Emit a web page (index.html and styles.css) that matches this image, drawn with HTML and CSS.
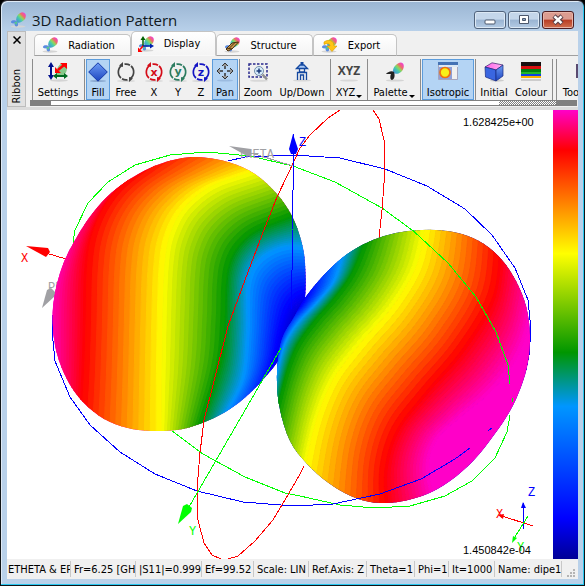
FILE: index.html
```html
<!DOCTYPE html>
<html lang="en">
<head>
  <meta charset="UTF-8" />
  <title>3D Radiation Pattern</title>
  <link rel="stylesheet" href="styles.css">
</head>
<body>
  <!-- Shared icon shapes -->
  <svg class="defs" width="0" height="0" aria-hidden="true">
    <defs>
      <linearGradient id="lobeGrad" x1="0" y1="1" x2="1" y2="0">
        <stop offset="0" stop-color="#4a7de0" />
        <stop offset="0.35" stop-color="#45c8b0" />
        <stop offset="0.52" stop-color="#8fd85a" />
        <stop offset="0.68" stop-color="#f06a6a" />
        <stop offset="0.9" stop-color="#f040d0" />
      </linearGradient>
      <linearGradient id="blueGrad" x1="0" y1="0" x2="0" y2="1">
        <stop offset="0" stop-color="#6e9cf4" />
        <stop offset="1" stop-color="#1c45c0" />
      </linearGradient>
      <linearGradient id="pinkGrad">
        <stop offset="0" stop-color="#ff60e8" />
        <stop offset="1" stop-color="#ffb0f0" />
      </linearGradient>
      <symbol id="lobe" viewBox="0 0 16 16">
        <ellipse cx="8" cy="14.5" rx="7.5" ry="1.2" fill="#d4d4d4" />
        <path d="M7 10.500C4.500 6 8.500 .5 12.500 .3C16.800 .8 16.300 5 14.500 7.500C12.500 10 9.500 11 7 10.500Z" fill="url(#lobeGrad)" />
        <path d="M7 9.500C5 7.500 1 8 1 10C1 11.500 3 11.500 4.500 11.300C4.500 13 5 14.500 6.500 14.500C8.500 14.500 8.500 11.500 7 9.500Z" fill="#5b8be0" />
        <path d="M4 10.500L7.500 9.200L6.500 13Z" fill="#55c890" />
      </symbol>
      <symbol id="rotate" viewBox="0 0 20 20">
        <ellipse cx="10" cy="19" rx="9" ry="1" fill="#d8d8d8" />
        <g fill="none" stroke="currentColor" stroke-width="1.7">
          <path d="M6.500 3A8 8 0 0 0 5 16" />
          <path d="M13.500 17A8 8 0 0 0 15 4" />
          <path d="M8.500 2.200A8 8 0 0 1 14 3.200" />
          <path d="M11.500 17.800A8 8 0 0 1 6 16.800" />
        </g>
        <path d="M7 0V5L3 3.500ZM13 20V15L17 16.500Z" fill="currentColor" />
      </symbol>
    </defs>
  </svg>

  <div class="window">
    <header class="titlebar">
      <svg class="title-icon" viewBox="0 0 16 16"><use href="#lobe" /></svg>
      <h1>3D Radiation Pattern</h1>
      <div class="window-buttons">
        <button type="button" aria-label="Minimize">
          <svg viewBox="0 0 14 12"><rect x="2" y="6" width="10" height="4" rx="1" fill="#fff" stroke="#4c586c" /></svg>
        </button>
        <button type="button" aria-label="Maximize">
          <svg viewBox="0 0 14 12"><path d="M2.500 1.500h9v8h-9z" fill="#fff" stroke="#4c586c" /><path d="M5.500 4.500h3v2h-3z" fill="#8ba4c4" stroke="#4c586c" /></svg>
        </button>
        <button type="button" class="close" aria-label="Close">
          <svg viewBox="0 0 14 12"><path d="M3 2L11 9.500M11 2L3 9.500" stroke="#5a4048" stroke-width="4.500" /><path d="M3.500 2.300L10.500 9.200M10.500 2.300L3.500 9.200" stroke="#fff" stroke-width="2.500" /></svg>
        </button>
      </div>
    </header>

    <main>
      <section class="ribbon" aria-label="Ribbon">
        <div class="ribbon-side">
          <button type="button" aria-label="Close ribbon"><svg viewBox="0 0 8 8"><path d="M.5 .5L7.500 7.500M7.500 .5L.5 7.500" stroke="#000" stroke-width="1.500" /></svg></button>
          <span>Ribbon</span>
        </div>

        <div class="ribbon-body">
          <nav class="tabs">
            <button type="button"><svg viewBox="0 0 16 16"><use href="#lobe" /></svg><span>Radiation</span></button>
            <button type="button" class="active" aria-current="page">
              <svg viewBox="0 0 16 16"><use href="#lobe" />
                <path d="M5 10V2" stroke="#006000" stroke-width="1.500" /><path d="M2.500 4L5 0L7.500 4Z" fill="#006000" /><path d="M5 10H13" stroke="#0020b0" stroke-width="1.500" /><path d="M12 7.500L16 10L12 12.500Z" fill="#0020b0" /><path d="M5 10L2 13.500" stroke="red" stroke-width="1.500" /><path d="M0 11.500V16H4.500Z" fill="red" /></svg>
              <span>Display</span>
            </button>
            <button type="button">
              <svg viewBox="0 0 16 16"><use href="#lobe" /><path d="M2 12L8 6L14.500 5L8 12L4 14Z" fill="#c99a50" stroke="#4a3010" /><path d="M2 12L5 11.500L8 12M5 11.500L11 5.500" fill="none" stroke="#4a3010" /></svg>
              <span>Structure</span>
            </button>
            <button type="button">
              <svg viewBox="0 0 16 16"><use href="#lobe" /><path d="M3 5C7 2 13 3 13 9H16L11 14.500L6 9H9C9 6.500 6 6 3 7.500Z" fill="#ffc414" stroke="#d89a00" stroke-width=".6" /></svg>
              <span>Export</span>
            </button>
            <div class="tabs-rest"></div>
          </nav>

          <div class="toolbar" role="toolbar" aria-label="Display tools">
            <div class="group">
              <button type="button" class="w50">
                <svg viewBox="0 0 20 20"><ellipse cx="11" cy="18.500" rx="9" ry="1.200" fill="#d4d4d4" /><path d="M8 14C8 5 12 1 16 1C20 2 20 8 17 12C14 15 11 16 8 14Z" fill="#86c98a" /><path d="M3 3V15" stroke="#00108c" stroke-width="2" /><path d="M0 5L3 0L6 5ZM0 13L3 18L6 13Z" fill="#00108c" /><path d="M10 8L16 3" stroke="red" stroke-width="2.500" /><path d="M12 1H19V7ZM7 5V11H13Z" fill="red" /><path d="M7 14H18" stroke="#006a20" stroke-width="2" /><path d="M9 11L5 14L9 17ZM16 11L20 14L16 17Z" fill="#006a20" /></svg>
                <span>Settings</span>
              </button>
            </div>
            <div class="group">
              <button type="button" class="w24 pressed" aria-pressed="true">
                <svg viewBox="0 0 20 20"><ellipse cx="10" cy="19" rx="8" ry="1" fill="#8aa9d0" /><path d="M10 .8L19.300 10L10 19.200L.7 10Z" fill="url(#blueGrad)" stroke="#1438a8" /></svg>
                <span>Fill</span>
              </button>
              <button type="button" class="w32"><svg class="c-free" viewBox="0 0 20 20"><use href="#rotate" /></svg><span>Free</span></button>
              <button type="button" class="w24"><svg class="c-x" viewBox="0 0 20 20"><use href="#rotate" /><text x="10" y="14">x</text></svg><span>X</span></button>
              <button type="button" class="w24"><svg class="c-y" viewBox="0 0 20 20"><use href="#rotate" /><text x="10" y="13">y</text></svg><span>Y</span></button>
              <button type="button" class="w22"><svg class="c-z" viewBox="0 0 20 20"><use href="#rotate" /><text x="10" y="14">z</text></svg><span>Z</span></button>
              <button type="button" class="w26 pressed" aria-pressed="true">
                <svg viewBox="0 0 20 20"><ellipse cx="10" cy="18.500" rx="8" ry="1" fill="#9bbbe0" /><path d="M10 2V7M10 11V16M3 9H8M12 9H17" stroke="#333" stroke-width="1.500" /><path d="M7 4L10 1L13 4M7 14L10 17L13 14M5 6L2 9L5 12M15 6L18 9L15 12" fill="#999" stroke="#333" /></svg>
                <span>Pan</span>
              </button>
            </div>
            <div class="group">
              <button type="button" class="w34">
                <svg viewBox="0 0 20 20"><ellipse cx="11" cy="18.800" rx="9" ry="1" fill="#d8d8d8" /><path d="M1 2H19V15H1Z" fill="none" stroke="#28288c" stroke-width="1.500" stroke-dasharray="2.500 1.500" /><circle cx="11" cy="9" r="4.500" fill="#d7ecfb" stroke="#7590aa" /><path d="M8.500 9H13.500M11 6.500V11.500" stroke="#183878" stroke-width="1.500" /><path d="M14.500 12.500L19 17.500" stroke="#909090" stroke-width="2.500" /></svg>
                <span>Zoom</span>
              </button>
              <button type="button" class="w54">
                <svg viewBox="0 0 20 20"><ellipse cx="10" cy="18.500" rx="9" ry="1" fill="#d8d8d8" /><path d="M10 0V3" stroke="#1448a0" stroke-width="3" /><path d="M4.500 6.500L8 3H12L15.500 6.500Z" fill="#a8c8f4" stroke="#1448a0" stroke-width="1.300" /><path d="M7.500 7V10H12.500V7M5.500 18V10.500H14.500V18M8.500 18V13H11.500V18" fill="none" stroke="#1448a0" stroke-width="1.300" /></svg>
                <span>Up/Down</span>
              </button>
            </div>
            <div class="group">
              <button type="button" class="w34 menu"><svg viewBox="0 0 20 20"><ellipse cx="10" cy="18.500" rx="9" ry="1" fill="#d8d8d8" /><text class="xyz" x="10" y="13">XYZ</text></svg><span>XYZ</span></button>
            </div>
            <div class="group">
              <button type="button" class="w50 menu">
                <svg viewBox="0 0 20 20"><ellipse cx="11" cy="18.500" rx="9" ry="1" fill="#d4d4d4" /><path d="M9 11C8 5 13 1 17 .5C21 1 20.500 7 17 10C14 12.500 11 12 9 11Z" fill="url(#lobeGrad)" /><path d="M10 10C8 8 3 10 2 12H7C6 14 6 18 8 18C11 17 11 13 10 10Z" fill="#222" /></svg>
                <span>Palette</span>
              </button>
            </div>
            <div class="group">
              <button type="button" class="w52 pressed" aria-pressed="true">
                <svg viewBox="0 0 20 20"><path d="M.5 .5H19.500V17.500H.5Z" fill="#8f9fd8" stroke="#a6a6bd" /><path d="M0 0H20V3H0Z" fill="#4472b4" /><path d="M1 3H20V5H1Z" fill="#dce8f4" /><path d="M14 5H19V17H14Z" fill="#f0f0f0" /><circle cx="7" cy="10.500" r="5" fill="#f8f018" stroke="#f07010" stroke-width="1.700" /></svg>
                <span>Isotropic</span>
              </button>
            </div>
            <div class="group">
              <button type="button" class="w34">
                <svg viewBox="0 0 20 20"><ellipse cx="13" cy="18.500" rx="7" ry="1.200" fill="#ccc" /><path d="M1 5L8 .8L19 3L12 8Z" fill="url(#pinkGrad)" stroke="#30206a" stroke-width=".7" /><path d="M1 5L12 8V19L1.500 15Z" fill="#3a66e0" stroke="#182a80" stroke-width=".7" /><path d="M12 8L19 3V14L12 19Z" fill="url(#blueGrad)" stroke="#182a80" stroke-width=".7" /></svg>
                <span>Initial</span>
              </button>
              <button type="button" class="w40">
                <svg viewBox="0 0 20 20"><path d="M0 0H20V4H0Z" fill="#181010" /><path d="M0 4H20V7H0Z" fill="#d81010" /><path d="M0 7H20V10H0Z" fill="#008010" /><path d="M0 10H20V13H0Z" fill="#20b828" /><path d="M0 12H20V14H0Z" fill="#1040e0" /><path d="M0 14H20V16H0Z" fill="#f8b000" /><path d="M0 17H20V19H0Z" fill="#ccc" /></svg>
                <span>Colour</span>
              </button>
            </div>
            <div class="group spacer"></div>
            <div class="group last">
              <button type="button" class="w26"><svg viewBox="0 0 20 20"><path d="M15 2H20V16H15Z" fill="#5a4a70" /><path d="M17 5H20V14H17Z" fill="#e090e0" /></svg><span>Too</span></button>
            </div>
          </div>
          <div class="scroll-strip"><i></i><b></b><em></em></div>
        </div>
      </section>

      <section class="view" aria-label="Radiation pattern">
        <svg class="plot" viewBox="7 110 546 449" preserveAspectRatio="xMidYMid meet">
          <defs>
            <clipPath id="leftClip"><path id="leftOutline" /></clipPath>
            <clipPath id="rightClip"><path id="rightOutline" /></clipPath>
          </defs>

          <!-- reference circles and arrows behind the lobes -->
          <g class="lines">
            <polyline class="blue" points="228,161 245,157 293,155 340,158 385,169 427,186 465,209 492,235 515,268 528,300 531,330 529,355 526,370" />
            <polyline class="blue" points="293,506 243,502 197,491 155,474 120,452 90,425 70,397 55,361 52,330 52,315" />
            <polyline class="green" points="73,243 75,230 88,203 108,182 135,165 170,155 207,152 250,156 293,166 335,182 382,208 412,230" />
            <polyline class="green" points="510,415 507,432 495,458 472,481 445,496 410,506 375,508 340,505 300,496 285,493 245,477 203,454 172,431" />
            <polyline class="red" points="340,110 328,118 310,135 300,148 288,174 277,197" />
            <polyline class="red" points="204,420 200,452 197,490 198,520 204,543 212,555 221,559 228,559 238,556 255,541 273,520 285,500 300,474 304,466" />
            <polyline class="red" points="373,110 379,119 384,140 385,170 382,210 379,238" />
            <polyline class="grey" points="248,152 293,166" />
            <polyline class="red" points="46,253 66,259" />
          </g>
          <path fill="#a0a0a4" d="M229 146L251 149V157L247 156Z" />
          <path fill="#a0a0a4" d="M42 308L47 290L51 288L55 292V296Z" />
          <path fill="red" d="M26 246L48 248L50 252L46 257Z" />
          <g class="axis-text">
            <text x="238" y="158" fill="#a0a0a4">THETA</text>
            <text x="48" y="291" fill="#a0a0a4">PHI</text>
            <text x="21" y="262" fill="red">X</text>
          </g>

          <g id="leftLobe" clip-path="url(#leftClip)"></g>
          <g id="rightLobe" clip-path="url(#rightClip)"></g>

          <!-- lines in front of the lobes -->
          <g class="lines">
            <polyline class="red" points="288,174 277,197 262,235 245,280 228,326 213,385 204,420 201,445" />
            <polyline class="blue" points="293,134 293,190 292,230 292,270 291,310" />
            <polyline class="green" points="281,348 189,507" />
            <polyline class="green" points="410,228 420,237 448,263 476,297 496,332 508,365 510,384" />
            <polyline class="green" points="513,398 512,402" />
            <polyline class="blue" points="470,448 455,459 421,479 380,494 333,504 293,506" />
            <polyline class="blue" points="492,428 488,431" />
            <polyline class="red" points="533,526 499,515" />
            <polyline class="blue" points="523,529 523,503" />
            <polyline class="green" points="528,516 513,540" />
          </g>
          <path fill="blue" d="M293 134L298 149L296 154H291L289 149Z" />
          <path fill="lime" d="M178 524L183 506L187 504L192 508L191 512Z" />
          <path fill="blue" d="M523 502L526 508H521Z" />
          <path fill="red" d="M498 515L504 514L503 519Z" />
          <path fill="lime" d="M512 543L513 536L517 538Z" />
          <g class="axis-text">
            <text x="299" y="146" fill="blue">Z</text>
            <text x="189" y="535" fill="lime">Y</text>
            <text x="528" y="496" fill="blue">Z</text>
            <text x="496" y="518" fill="red">X</text>
            <text x="517" y="551" fill="lime">Y</text>
          </g>
          <g class="value-text">
            <text x="463" y="126">1.628425e+00</text>
            <text x="463" y="554">1.450842e-04</text>
          </g>
        </svg>
        <div class="legend"></div>
      </section>

      <footer class="status">
        <span>ETHETA &amp; EP</span>
        <span>Fr=6.25 [GH</span>
        <span>|S11|=0.999</span>
        <span>Ef=99.52</span>
        <span>Scale: LIN</span>
        <span>Ref.Axis: Z</span>
        <span>Theta=1</span>
        <span>Phi=1</span>
        <span>It=1000</span>
        <span>Name: dipe1</span>
        <svg class="grip" viewBox="0 0 9 9"><path d="M6 0h2v2h-2zM3 3h2v2h-2zM6 3h2v2h-2zM0 6h2v2h-2zM3 6h2v2h-2zM6 6h2v2h-2z" fill="#b4b4b4" /></svg>
      </footer>
    </main>
  </div>

  <script src="pattern.js"></script>
</body>
</html>
```

FILE: styles.css
```css
* {
  box-sizing: border-box;
}

body {
  margin: 0;
  background-color: #000;
  font-family: 'DejaVu Sans Condensed', 'DejaVu Sans', Tahoma, sans-serif;
  font-size: 11px;
  color: #000;
}

button {
  margin: 0;
  padding: 0;
  border: none;
  background: none;
  font: inherit;
  color: inherit;
}

.defs {
  position: absolute;
}

.window {
  min-height: 100vh;
  display: flex;
  flex-direction: column;
  padding: 0 6px 6px;
  border: 1px solid #101418;
  border-top-color: #302c34;
  border-radius: 7px 7px 0 0;
  background: linear-gradient(#9ab5d3, #b9d1ea 31px);
  box-shadow: inset -1px -1px 0 #28c8f0, inset 1px 1px 0 #dfeaf6;
}

.titlebar {
  height: 30px;
  display: flex;
  align-items: center;
  padding-left: 3px;
}

.title-icon {
  width: 16px;
  height: 16px;
  margin-top: 8px;
}

.titlebar h1 {
  flex: 1;
  margin: 8px 0 0 6px;
  font: 15px/20px 'Open Sans', 'Segoe UI', sans-serif;
  color: #101820;
}

.window-buttons {
  display: flex;
  gap: 2px;
  padding: 8px 4px 0 0;
}

.window-buttons button {
  width: 32px;
  height: 18px;
  border: 1px solid #51637c;
  border-radius: 3px;
  background: linear-gradient(#c4d6ea 45%, #9ab4d2 50%, #b4cbe4);
  box-shadow: inset 0 0 0 1px #dce8f4;
}

.window-buttons svg {
  display: block;
  width: 14px;
  height: 12px;
  margin: 1px auto;
}

.window-buttons .close {
  border-color: #4c1c20;
  background: linear-gradient(#dc9c90 45%, #b83c24 50%, #d07050);
  box-shadow: inset 0 0 0 1px #e8b4a8;
}

main {
  flex: 1;
  min-width: 0;
  display: flex;
  flex-direction: column;
  background-color: #f0f0f0;
}

/* Ribbon */
.ribbon {
  display: flex;
  height: 79px;
  border-bottom: 3px solid #dcdcdc;
}

.ribbon-side {
  width: 19px;
  display: flex;
  flex-direction: column;
  align-items: center;
  justify-content: space-between;
  padding: 4px 0 2px;
  border: 1px solid #bcbcbc;
  background-color: #e1e1e1;
}

.ribbon-side button,
.ribbon-side svg {
  display: block;
  width: 8px;
  height: 8px;
}

.ribbon-side span {
  writing-mode: vertical-rl;
  transform: rotate(180deg);
  line-height: 16px;
}

.ribbon-body {
  flex: 1;
  min-width: 0;
  display: flex;
  flex-direction: column;
  padding-left: 4px;
}

.tabs {
  display: flex;
  align-items: flex-end;
  height: 25px;
  padding-left: 4px;
}

.tabs button {
  width: 97px;
  height: 22px;
  display: flex;
  align-items: center;
  padding: 0 7px;
  border: 1px solid #c4c4c4;
  border-bottom-color: #a0a0a0;
  border-radius: 5px 5px 0 0;
  background: linear-gradient(#fff, #f4f4f4);
}

.tabs button span {
  flex: 1;
  padding-left: 2px;
  text-align: center;
}

.tabs button.active {
  width: 85px;
  height: 25px;
  padding: 0 7px 0 6px;
  border-bottom-color: #f8f8f8;
}

.tabs button:nth-child(4) {
  width: 84px;
}

.tabs svg {
  width: 16px;
  height: 16px;
}

.tabs-rest {
  flex: 1;
  border-bottom: 1px solid #a0a0a0;
}

.toolbar {
  display: flex;
  height: 44px;
  padding: 3px 0 0 2px;
  overflow: hidden;
}

.group {
  flex: none;
  display: flex;
  padding-right: 1px;
  border-left: 1px solid #8c8c8c;
}

.group + .group {
  padding-left: 1px;
}

.group.spacer {
  width: 4px;
}

.toolbar button {
  height: 41px;
  display: flex;
  flex-direction: column;
  align-items: center;
  padding-top: 3px;
  white-space: nowrap;
}

.toolbar button svg {
  flex: none;
  width: 20px;
  height: 20px;
  overflow: visible;
}

.toolbar button span {
  line-height: 16px;
  margin-top: 3px;
}

.toolbar .pressed {
  background-color: #b4d4f4;
  box-shadow: inset 0 0 0 1px #5c9cdc;
}

.toolbar .menu span::after {
  content: "";
  display: inline-block;
  margin-left: 1px;
  border: 3px solid transparent;
  border-top-color: #000;
  border-bottom: none;
  vertical-align: -2px;
}

.w22 { width: 22px; }
.w24 { width: 24px; }
.w26 { width: 26px; }
.w32 { width: 32px; }
.w34 { width: 34px; }
.w40 { width: 40px; }
.w50 { width: 50px; }
.w52 { width: 52px; }
.w54 { width: 54px; }

.toolbar text {
  font: bold 11px 'DejaVu Sans', sans-serif;
  text-anchor: middle;
  fill: currentColor;
}

.toolbar text.xyz {
  font: bold 12px 'Open Sans', sans-serif;
  fill: #444;
}

.c-free { color: #444; }
.c-x { color: #d40c18; }
.c-y { color: #2c7c60; }
.c-z { color: #1414c4; }

.scroll-strip {
  height: 6px;
  display: flex;
  margin-right: 1px;
  border-top: 1px solid #808080;
  border-bottom: 1px solid #808080;
  background-color: #fff;
}

.scroll-strip i {
  width: 21px;
  background-color: #808080;
}

.scroll-strip b {
  flex: 1;
}

.scroll-strip em {
  width: 78px;
  border-right: 21px solid #808080;
  background: repeating-conic-gradient(#808080 0 25%, #fff 0 50%) 0 0 / 2px 2px;
}

/* 3D view */
.view {
  flex: 1;
  min-height: 0;
  display: flex;
  background-color: #fff;
}

.plot {
  flex: 1;
  min-width: 0;
  display: block;
}

.legend {
  width: 25px;
  background: linear-gradient(#ff00c8, #f00 9%, #ff0 32%, #009600 54%, #0096ff 66%, #00f 91%, #000096);
}

.lines {
  fill: none;
  stroke-width: 1;
  shape-rendering: crispEdges;
}

.lines .red { stroke: #f00; }
.lines .green { stroke: #0f0; }
.lines .blue { stroke: #00f; }
.lines .grey { stroke: #a0a0a4; }

.axis-text {
  font: 12px 'Liberation Mono', monospace;
}

.value-text {
  font: 11px 'Liberation Sans', Arial, sans-serif;
}

/* Status bar */
.status {
  height: 20px;
  display: grid;
  grid-template-columns: 64fr 65fr 66fr 52fr 55fr 58fr 48fr 34fr 46fr 67fr 16fr;
  align-items: center;
}

.status span {
  min-width: 0;
  height: 16px;
  padding-left: 1px;
  border-right: 1px solid #c8c8c8;
  line-height: 17px;
  white-space: nowrap;
  overflow: hidden;
}

.status span + span {
  padding-left: 3px;
}

.grip {
  width: 9px;
  height: 9px;
  align-self: end;
  justify-self: end;
  margin: 0 2px 1px 0;
}
```

FILE: pattern.js
```js
// Colour scale of the field strength
const MAGENTA = [255, 0, 200];
const RED = [255, 0, 0];
const YELLOW = [255, 255, 0];
const GREEN = [0, 150, 0];
const SKY = [0, 150, 255];
const BLUE = [0, 0, 255];
const NAVY = [0, 0, 210];

// Each level line is a list of points from the top to the bottom of the lobe
const leftLobe = {
  outline: [[197,157],[173,160],[150,168],[127,181],[107,197],[89,218],[74,242],[64,262],[57,284],[53,307],[53,328],[56,350],[63,371],[74,391],[89,408],[108,421],[132,429],[157,431],[183,429],[207,421],[230,409],[250,393],[267,375],[278,361],[288,345],[298,322],[305,297],[305,263],[301,240],[292,216],[277,194],[255,174],[228,162]],
  levels: [
    [MAGENTA, [[90,165],[72,215],[60,245],[54,275],[49,305],[48,330],[48,370],[49,400],[52,440]]],
    [RED, [[196,130],[145,167],[117,190],[101,213],[91,240],[87,273],[86,323],[84,380],[80,440]]],
    [YELLOW, [[292,160],[243,175],[210,187],[184,208],[170,235],[165,263],[163,307],[162,373],[162,440]]],
    [GREEN, [[322,205],[290,217],[256,231],[238,247],[229,266],[226,290],[225,323],[220,365],[198,432]]],
    [SKY, [[322,252],[292,247],[270,253],[255,266],[249,283],[248,303],[248,333],[243,380],[225,415]]],
    [BLUE, [[322,291],[309,292],[299,295],[292,301],[287,309],[283,320],[279,335],[275,355],[265,392]]],
    [NAVY, [[325,306],[315,307],[306,309],[300,312],[296,318],[292,328],[289,342],[286,362],[280,398]]]
  ]
};

const rightLobe = {
  outline: [[305,298],[323,276],[342,258],[362,245],[384,236],[408,231],[436,230],[462,234],[484,244],[502,260],[516,281],[526,306],[530,335],[528,362],[521,387],[510,411],[494,435],[474,460],[450,481],[422,496],[388,503],[358,499],[330,484],[307,464],[290,441],[280,410],[277,383],[278,360],[281,342],[286,330],[293,319]],
  levels: [
    [NAVY, [[297,286],[291,297],[286,306],[282,314],[277,324],[273,340],[268,365]]],
    [BLUE, [[311,282],[307,295],[300,307],[291,317],[283,332],[277,350],[271,372]]],
    [SKY, [[345,248],[335,280],[317,303],[299,322],[287,340],[281,358],[274,390]]],
    [GREEN, [[368,235],[353,272],[335,298],[315,321],[298,345],[287,373],[277,412]]],
    [YELLOW, [[427,218],[417,265],[393,306],[360,344],[333,380],[315,425],[303,480]]],
    [RED, [[500,235],[494,294],[464,347],[425,393],[397,430],[385,470],[386,515]]],
    [MAGENTA, [[540,270],[523,345],[495,388],[460,418],[437,440],[429,470],[440,515]]]
  ]
};

const STEPS = 14;

// Catmull-Rom spline through the given points
function smooth(points, closed, parts) {
  const n = points.length;
  const at = i => closed ? points[(i + n) % n] : points[Math.max(0, Math.min(n - 1, i))];
  const out = [];
  const last = closed ? n : n - 1;
  for (let i = 0; i < last; i++) {
    const a = at(i - 1), b = at(i), c = at(i + 1), d = at(i + 2);
    for (let k = 0; k < parts; k++) {
      const t = k / parts;
      out.push([0, 1].map(j => 0.5 * (2 * b[j] + (c[j] - a[j]) * t
        + (2 * a[j] - 5 * b[j] + 4 * c[j] - d[j]) * t * t
        + (3 * b[j] - a[j] - 3 * c[j] + d[j]) * t * t * t)));
    }
  }
  if (!closed) out.push(points[n - 1]);
  return out;
}

function toPath(points) {
  return 'M' + points.map(p => p[0].toFixed(1) + ' ' + p[1].toFixed(1)).join('L') + 'Z';
}

function mix(a, b, t) {
  return a.map((v, i) => v + (b[i] - v) * t);
}

function drawLobe(name, lobe) {
  const group = document.getElementById(name + 'Lobe');
  const outline = toPath(smooth(lobe.outline, true, 4));
  document.getElementById(name + 'Outline').setAttribute('d', outline);

  const add = (d, color) => {
    const path = document.createElementNS('http://www.w3.org/2000/svg', 'path');
    const rgb = 'rgb(' + color.map(Math.round).join(',') + ')';
    path.setAttribute('d', d);
    path.setAttribute('fill', rgb);
    path.setAttribute('stroke', rgb);
    group.appendChild(path);
  };

  const levels = lobe.levels.map(l => [l[0], smooth(l[1], false, 6)]);

  // first colour fills the whole lobe, the last one everything past its line
  add(outline, levels[0][0]);
  for (let i = 0; i < levels.length - 1; i++) {
    const [c1, p1] = levels[i];
    const [c2, p2] = levels[i + 1];
    const line = t => p1.map((p, k) => mix(p, p2[k], t));
    for (let s = 0; s < STEPS; s++) {
      const from = line(s / STEPS);
      const to = line((s + 1) / STEPS).reverse();
      add(toPath(from.concat(to)), mix(c1, c2, (s + 0.5) / STEPS));
    }
  }
  const [color, edge] = levels[levels.length - 1];
  add(toPath(edge.concat([[600, 600], [600, 200]])), color);
}

drawLobe('left', leftLobe);
drawLobe('right', rightLobe);
```
